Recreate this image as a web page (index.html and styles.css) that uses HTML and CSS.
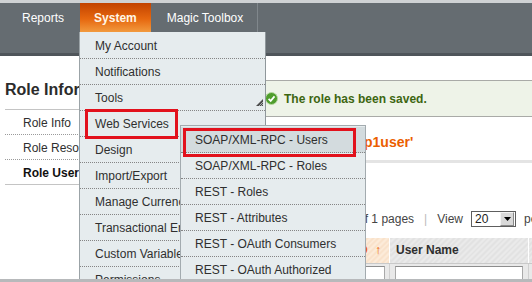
FILE: index.html
```html
<!DOCTYPE html>
<html lang="en">
<head>
    <meta charset="UTF-8">
    <title>Edit Role 'soap1user'</title>
    <meta name="viewport" content="width=device-width, initial-scale=1.0">
    <link rel="stylesheet" href="styles.css">
</head>
<body>
<div class="window">
    <div class="nav">
        <div class="nav-item">Reports</div>
        <div class="nav-item active">System
            <ul class="menu">
                <li>My Account</li>
                <li>Notifications</li>
                <li>Tools
                    <svg class="grip" width="7" height="7" viewBox="0 0 7 7"><polygon points="7,0 7,7 0,7" fill="#4c4c4c"/><path d="M3 7 L7 3 M5 7 L7 5" stroke="#bfc6c9" stroke-width="0.8"/></svg>
                </li>
                <li class="open">
                    <span class="mark"></span>Web Services
                    <ul class="submenu">
                        <li class="hover"><span class="mark"></span>SOAP/XML-RPC - Users</li>
                        <li>SOAP/XML-RPC - Roles</li>
                        <li>REST - Roles</li>
                        <li>REST - Attributes</li>
                        <li>REST - OAuth Consumers</li>
                        <li>REST - OAuth Authorized</li>
                    </ul>
                </li>
                <li>Design</li>
                <li>Import/Export</li>
                <li>Manage Currency</li>
                <li>Transactional Emails</li>
                <li>Custom Variables</li>
                <li>Permissions</li>
            </ul>
        </div>
        <div class="nav-item last">Magic Toolbox</div>
    </div>

    <div class="page">
        <div class="side">
            <h3>Role Information</h3>
            <ul class="tabs">
                <li>Role Info</li>
                <li>Role Resources</li>
                <li class="current">Role Users</li>
            </ul>
        </div>

        <div class="main">
            <div class="message">
                <svg width="13" height="13" viewBox="0 0 13 13"><circle cx="6.5" cy="6.5" r="6" fill="#4f9d2d" stroke="#b5d8a0"/><path d="M3.6 6.8 L5.7 8.9 L9.5 4.4" fill="none" stroke="#fff" stroke-width="1.7"/></svg>
                The role has been saved.
            </div>

            <div class="content-header">
                <h3>Edit Role 'soap1user'</h3>
            </div>

            <div class="pager">
                <span>Page</span>
                <span class="arrow">&lsaquo;</span>
                <span class="page-input">1</span>
                <span class="arrow">&rsaquo;</span>
                <span>of 1 pages</span>
                <span class="sep">|</span>
                <span>View</span>
                <div class="select">
                    <span class="value">20</span>
                    <span class="button"><svg width="7" height="4" viewBox="0 0 7 4"><polygon points="0,0 7,0 3.5,4" fill="#000"/></svg></span>
                </div>
                <span>per page</span>
            </div>

            <table class="grid">
                <colgroup>
                    <col class="col-check">
                    <col class="col-id">
                    <col class="col-name">
                    <col class="col-more">
                </colgroup>
                <tr class="headings">
                    <th></th>
                    <th class="sorted">ID <span class="sort">&uarr;</span></th>
                    <th>User Name</th>
                    <th>First Name</th>
                </tr>
                <tr class="filter">
                    <td></td>
                    <td><div class="input"></div></td>
                    <td><div class="input"></div></td>
                    <td><div class="input"></div></td>
                </tr>
            </table>
        </div>
    </div>
</div>
</body>
</html>
```

FILE: styles.css
```css
* {
    box-sizing: border-box;
}

body {
    margin: 0;
    font-family: 'Liberation Sans', Arial, sans-serif;
    font-size: 12px;
    color: #2f2f2f;
    background: #fff;
}

.window {
    position: relative;
    height: 282px;
    overflow: hidden;
    border-top: 3px solid #cfd2d4;
    border-bottom: 3px solid #b7b9bb;
}

/* top navigation */
.nav {
    display: flex;
    gap: 2px;
    height: 53px;
    padding-left: 8px;
    background: #656c71;
    border-bottom: 3px solid #4f555a;
}

.nav-item {
    position: relative;
    height: 29px;
    line-height: 29px;
    padding: 1px 14px 0;
    color: #fff;
}

.nav-item.last {
    border-right: 1px solid #80878c;
}

.nav-item.active {
    font-weight: bold;
    color: #fff6e6;
    background: linear-gradient(to bottom, #c24300, #e6670f 55%, #f29a3e);
    z-index: 3;
}

.menu, .submenu {
    list-style: none;
    margin: 0;
    padding: 1px 0 0;
    position: absolute;
    font-weight: normal;
    color: #2f2f2f;
    background: #e6ecee;
}

.menu {
    left: -1px;
    top: 29px;
    width: 187px;
    border-left: 1px solid #9ba3a7;
    border-right: 1px solid #8f979b;
}

.menu li {
    position: relative;
    height: 26px;
    line-height: 23px;
    padding: 2px 0 0 15px;
    border-bottom: 1px dotted #858585;
    white-space: nowrap;
}

.submenu {
    left: 100px;
    top: 14px;
    width: 186px;
    border: 1px solid #a3abaf;
    border-bottom: none;
    z-index: 2;
}

.submenu li {
    padding-left: 14px;
}

.submenu li.hover {
    background: #d3dbde;
}

.mark {
    position: absolute;
    left: 5px;
    top: -2px;
    width: 93px;
    height: 30px;
    border: 3px solid #e2111c;
}

.submenu .mark {
    left: 2px;
    top: 1px;
    width: 173px;
    height: 29px;
}

.grip {
    position: absolute;
    right: 2px;
    bottom: 4px;
}

/* page body */
.page {
    display: flex;
}

.side {
    width: 250px;
    flex-shrink: 0;
}

.side h3 {
    margin: 24px 0 0 5px;
    font-size: 16px;
    line-height: 20px;
    color: #2b2b2b;
    white-space: nowrap;
}

.tabs {
    list-style: none;
    margin: 9px 0 0 5px;
    padding: 0;
    border-top: 1px solid #c4c4c4;
}

.tabs li {
    height: 25px;
    line-height: 24px;
    padding: 1px 0 0 18px;
    border-bottom: 1px dotted #9a9a9a;
}

.tabs li.current {
    font-weight: bold;
    color: #111;
    border-bottom: 1px solid #c4c4c4;
}

.main {
    flex: 1;
    min-width: 0;
}

.message {
    display: flex;
    align-items: center;
    gap: 6px;
    height: 37px;
    margin-top: 24px;
    padding-left: 15px;
    background: #eef3e8;
    border-top: 1px solid #a9aaa7;
    border-bottom: 1px solid #a9aaa7;
    color: #3d6611;
    font-weight: bold;
    white-space: nowrap;
}

.content-header {
    margin: 16px 0 0 22px;
    padding-bottom: 9px;
    border-bottom: 3px solid #e4e4e4;
}

.content-header h3 {
    margin: 0;
    font-size: 14px;
    line-height: 18px;
    color: #eb5e00;
    white-space: nowrap;
}

.pager {
    display: flex;
    align-items: center;
    gap: 4px;
    height: 20px;
    margin: 46px 0 0 20px;
    white-space: nowrap;
    color: #444;
}

.pager > * {
    flex-shrink: 0;
}

.pager .arrow {
    width: 10px;
    text-align: center;
}

.page-input {
    width: 24px;
    height: 16px;
    border: 1px solid #999;
    padding-left: 3px;
    line-height: 14px;
}

.pager .sep {
    margin: 0 6px;
    color: #bbb;
}

.select {
    display: flex;
    width: 45px;
    height: 16px;
    margin: 0 4px;
    border: 1px solid #5e5e5e;
    background: #fff;
}

.select .value {
    flex: 1;
    padding-left: 3px;
    line-height: 14px;
    color: #222;
}

.select .button {
    display: flex;
    align-items: center;
    justify-content: center;
    width: 14px;
    margin: 0 1px 0 0;
    background: #d9d9d9;
    border: 1px solid #f4f4f4;
    border-right-color: #8a8a8a;
    border-bottom-color: #8a8a8a;
}

/* grid */
.grid {
    margin: 9px 0 0 20px;
    border-collapse: collapse;
    table-layout: fixed;
    width: 360px;
}

.col-check { width: 55px; }
.col-id { width: 64px; }
.col-name { width: 139px; }

.grid th {
    height: 25px;
    padding: 0 6px;
    text-align: left;
    font-weight: bold;
    color: #2f2f2f;
    white-space: nowrap;
    background: repeating-linear-gradient(135deg, #e2e2e2 0 2px, #eaeaea 2px 4px);
    border-left: 1px solid #fff;
    border-bottom: 1px solid #c9c9c9;
}

.grid th.sorted {
    text-align: right;
    padding-right: 8px;
    color: #eb5e00;
    background: repeating-linear-gradient(135deg, #f9e2cb 0 2px, #fcebd9 2px 4px);
}

.sort {
    margin-left: 4px;
    font-weight: normal;
}

.grid td {
    height: 22px;
    padding: 2px 5px 0;
    vertical-align: top;
    background: #e9e9e9;
    border-left: 1px solid #d0d0d0;
}

.grid td:nth-child(2) {
    padding-right: 4px;
}

.input {
    height: 18px;
    background: #fff;
    border: 1px solid #a9a9a9;
    border-top-color: #8d8d8d;
}
```
